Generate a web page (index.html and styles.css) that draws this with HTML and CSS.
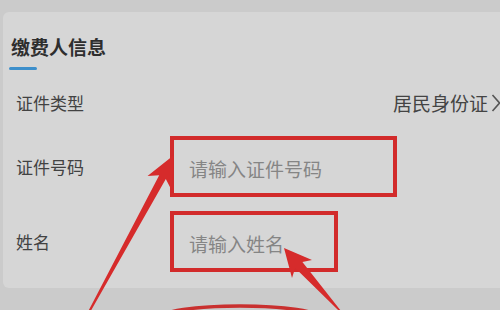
FILE: index.html
```html
<!DOCTYPE html>
<html lang="zh-CN">
<head>
<meta charset="utf-8">
<title>缴费人信息</title>
<link rel="stylesheet" href="styles.css">
</head>
<body>
<div class="page">
  <section class="card">
    <div class="title">缴费人信息</div>
    <div class="title-bar"></div>
    <div class="row row-type">
      <span class="label">证件类型</span>
      <span class="value">居民身份证</span>
      <svg class="chev" width="12" height="18" viewBox="0 0 12 18"><polyline points="1.5,1 8.5,9 1.5,17" fill="none" stroke="#555" stroke-width="1.6"/></svg>
    </div>
    <div class="row row-input">
      <span class="label">证件号码</span>
      <div class="field f-id"><span class="ph">请输入证件号码</span></div>
    </div>
    <div class="row row-input row-name">
      <span class="label">姓名</span>
      <div class="field f-name"><span class="ph">请输入姓名</span></div>
    </div>
  </section>
  <svg class="annot" width="500" height="310" viewBox="0 0 500 310">
    <ellipse cx="240" cy="318" rx="80" ry="12" fill="none" stroke="#c9302f" stroke-width="3.5"/>
    <polygon fill="#d62b2b" points="174,155 171.5,190 165.8,179 89.9,312.5 88.1,311.5 159.2,175.2 147.5,176"/>
    <polygon fill="#d62b2b" points="284,248 312,260 302.4,262 342.6,313 341.6,313.5 295.2,268 292,278"/>
  </svg>
</div>
</body>
</html>
```
FILE: styles.css
```css
html, body {
  margin: 0;
  padding: 0;
}
body {
  width: 500px;
  height: 310px;
  overflow: hidden;
  background: #cbcbcb;
  font-family: "Noto Sans CJK SC", "Noto Sans", sans-serif;
}
.page {
  position: relative;
  width: 500px;
  height: 310px;
  padding-top: 12px;
  box-sizing: border-box;
}
.card {
  margin-left: 3px;
  width: 520px;
  height: 276px;
  box-sizing: border-box;
  padding: 23px 20px 0 8px;
  background: #d6d6d6;
  border-radius: 6px 0 0 6px;
}
.title {
  font-size: 19px;
  line-height: 24px;
  font-weight: 700;
  color: #2e2e2e;
}
.title-bar {
  width: 28px;
  height: 3px;
  margin: 8px 0 0 -2px;
  background: #3d8fcb;
  border-radius: 2px;
}
.row {
  display: flex;
  align-items: center;
  padding-left: 5px;
}
.row-type {
  height: 66px;
}
.label {
  width: 154px;
  flex: none;
  font-size: 17px;
  line-height: 22px;
  color: #424242;
}
.value {
  margin-left: auto;
  font-size: 19px;
  line-height: 24px;
  color: #444;
}
.chev {
  flex: none;
  margin-left: 3px;
}
.row-input {
  height: 61px;
}
.row-name {
  margin-top: 14px;
}
.field {
  height: 61px;
  box-sizing: border-box;
  border: 4px solid #d22b2b;
  padding: 4px 0 0 15px;
  display: flex;
  align-items: center;
}
.f-id {
  width: 227px;
}
.f-name {
  width: 168px;
}
.ph {
  font-size: 19px;
  line-height: 24px;
  color: #858585;
}
.annot {
  position: absolute;
  left: 0;
  top: 0;
}
```
